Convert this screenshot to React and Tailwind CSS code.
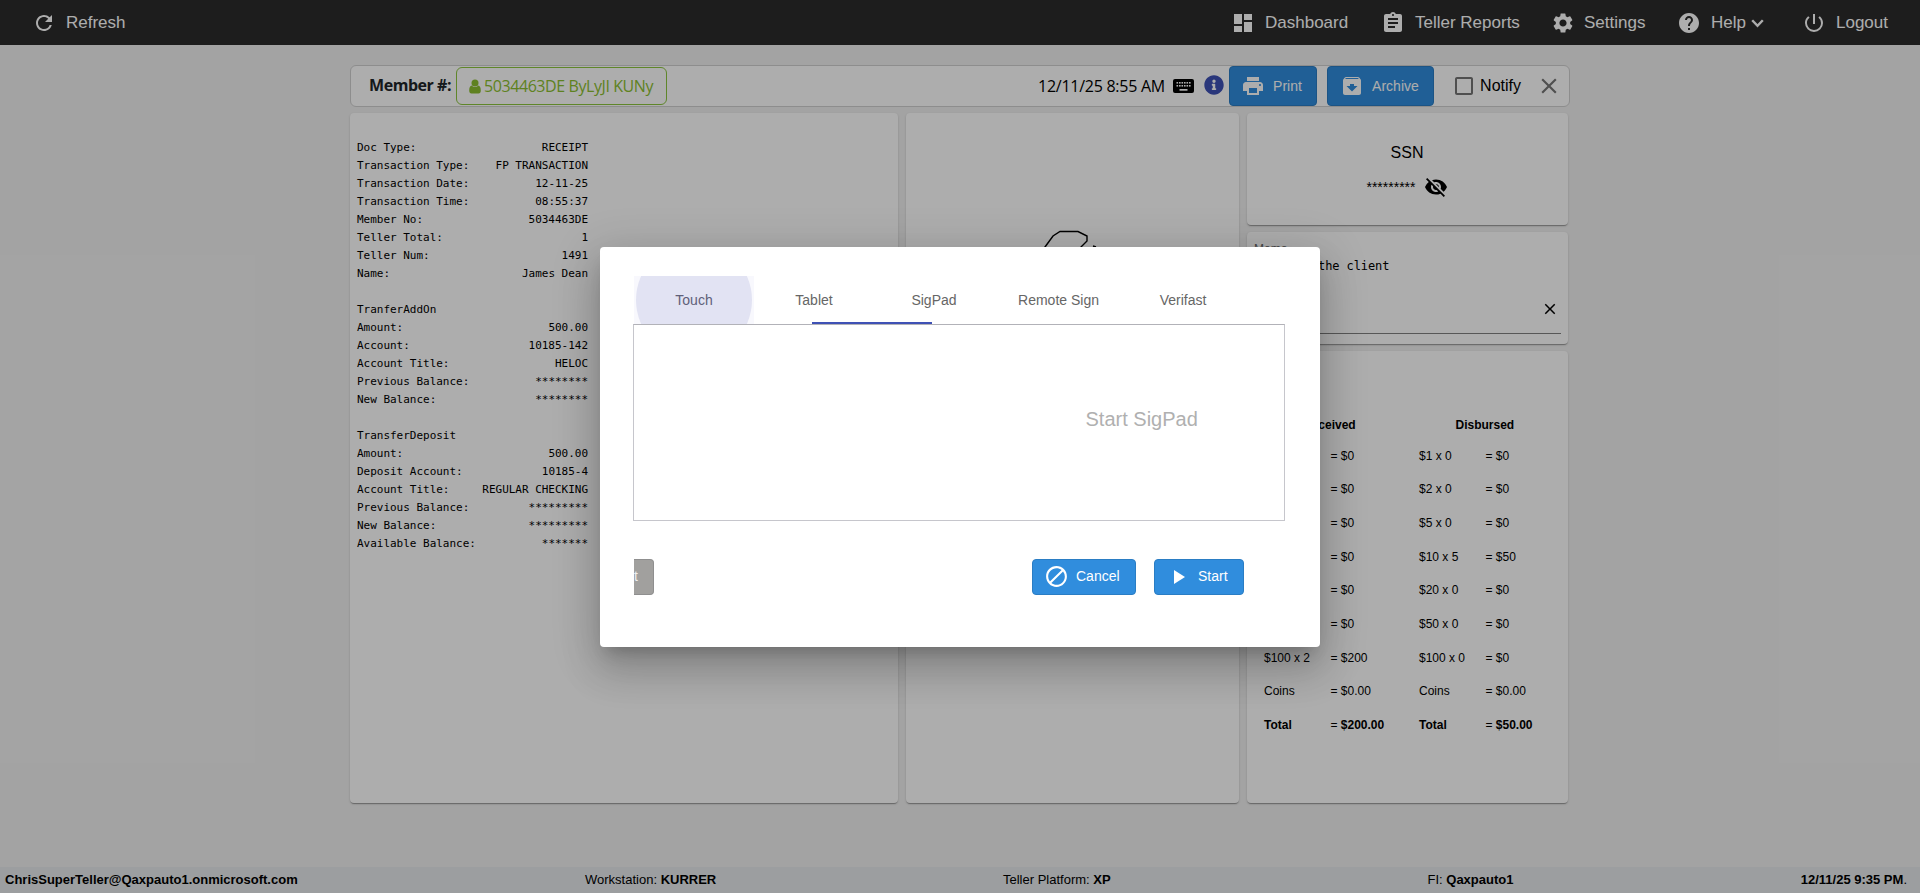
import React from "react";
import {
  MdRefresh, MdDashboard, MdAssignment, MdSettings, MdHelp, MdPowerSettingsNew,
  MdPrint, MdArchive, MdClose, MdVisibilityOff, MdBlock, MdPlayArrow, MdCheckBoxOutlineBlank,
} from "react-icons/md";
import { FaInfoCircle } from "react-icons/fa";

const receipt = [
  ["Doc Type:", "RECEIPT"],
  ["Transaction Type:", "FP TRANSACTION"],
  ["Transaction Date:", "12-11-25"],
  ["Transaction Time:", "08:55:37"],
  ["Member No:", "5034463DE"],
  ["Teller Total:", "1"],
  ["Teller Num:", "1491"],
  ["Name:", "James Dean"],
  ["", ""],
  ["TranferAddOn", ""],
  ["Amount:", "500.00"],
  ["Account:", "10185-142"],
  ["Account Title:", "HELOC"],
  ["Previous Balance:", "********"],
  ["New Balance:", "********"],
  ["", ""],
  ["TransferDeposit", ""],
  ["Amount:", "500.00"],
  ["Deposit Account:", "10185-4"],
  ["Account Title:", "REGULAR CHECKING"],
  ["Previous Balance:", "*********"],
  ["New Balance:", "*********"],
  ["Available Balance:", "*******"],
];

const cash = [
  ["$1 x 0", "$0", "$1 x 0", "$0"],
  ["$2 x 0", "$0", "$2 x 0", "$0"],
  ["$5 x 0", "$0", "$5 x 0", "$0"],
  ["$10 x 0", "$0", "$10 x 5", "$50"],
  ["$20 x 0", "$0", "$20 x 0", "$0"],
  ["$50 x 0", "$0", "$50 x 0", "$0"],
  ["$100 x 2", "$200", "$100 x 0", "$0"],
  ["Coins", "$0.00", "Coins", "$0.00"],
  ["Total", "$200.00", "Total", "$50.00"],
];

const card =
  "rounded bg-white shadow-[0_2px_1px_-1px_rgba(0,0,0,0.2),0_1px_1px_0_rgba(0,0,0,0.14),0_1px_3px_0_rgba(0,0,0,0.12)]";
const blueButton =
  "flex items-center rounded border border-[#2a7dc4] bg-[#308ddd] text-sm text-white";

function UserIcon() {
  return (
    <svg width="12" height="15" viewBox="0 0 12 15" fill="currentColor" className="mr-[3px]">
      <circle cx="6" cy="3.9" r="3.5" />
      <path d="M2.900 6.500C1 6.800 0.200 8.800 0.200 11.500C0.200 13.500 1 14.400 2.500 14.400H9.500C11 14.400 11.800 13.500 11.800 11.500C11.800 8.800 11 6.800 9.100 6.500C8.300 7.500 7.200 8 6 8S3.700 7.500 2.900 6.500Z" />
    </svg>
  );
}

function KeyboardIcon() {
  const keys = [3.5, 6, 8.5, 11, 13.5, 16];
  return (
    <svg width="21" height="14" viewBox="0 0 21 14">
      <rect width="21" height="14" rx="2" fill="black" />
      {keys.map((x) => <rect key={`a${x}`} x={x} y="3" width="1.6" height="1.6" fill="white" />)}
      {keys.map((x) => <rect key={`b${x}`} x={x} y="6" width="1.6" height="1.6" fill="white" />)}
      <rect x="6.5" y="10" width="8" height="1.7" fill="white" />
    </svg>
  );
}

function NavBar() {
  return (
    <nav className="flex h-[45px] items-center bg-[#2c2c2c] pl-8 text-[17px] text-white">
      <MdRefresh size={24} />
      <span className="ml-[10px]">Refresh</span>
      <div className="ml-auto flex items-center">
        <span className="flex w-[150px] items-center gap-[10px]"><MdDashboard size={24} />Dashboard</span>
        <span className="flex w-[170px] items-center gap-[10px]"><MdAssignment size={24} />Teller Reports</span>
        <span className="flex w-[126px] items-center gap-[9px]"><MdSettings size={24} />Settings</span>
        <span className="flex w-[125px] items-center">
          <MdHelp size={24} /><span className="ml-[10px]">Help</span>
          <svg className="mt-[2px] ml-[5px]" width="13" height="9" viewBox="0 0 13 9" fill="none" stroke="currentColor" strokeWidth="2.4"><path d="M1.2 1.2L6.5 6.8L11.8 1.2" /></svg>
        </span>
        <span className="flex w-[118px] items-center gap-[10px]"><MdPowerSettingsNew size={24} />Logout</span>
      </div>
    </nav>
  );
}

function MemberBar() {
  return (
    <div className="flex h-[42px] items-center rounded-[6px] border border-[#d0d0d0] bg-white">
      <span className="ml-[18px] w-[87px] whitespace-nowrap pb-[3px] font-['Open_Sans',sans-serif] text-[16px] font-bold tracking-[-0.45px] text-[#212529]">Member #:</span>
      <span className="flex h-[38px] w-[211px] items-center rounded-[6px] border border-[#8cc63f] pl-[12px] font-['Open_Sans',sans-serif] text-[16px] tracking-[-0.42px] whitespace-nowrap text-[#8cbf30]">
        <UserIcon />5034463DE ByLyJI KUNy
      </span>
      <span className="ml-auto flex items-center">
        <span className="w-[135px] whitespace-nowrap font-['Open_Sans',sans-serif] text-[16px] tracking-[-0.27px]">12/11/25 8:55 AM</span>
        <KeyboardIcon />
        <FaInfoCircle size={20} className="mr-[5px] mb-[2px] ml-[10px] text-[#3f51b5]" />
        <span className={`${blueButton} h-10 w-[88px] pl-[11px]`}><MdPrint size={24} /><span className="ml-2">Print</span></span>
        <span className={`${blueButton} ml-[10px] h-10 w-[107px] pl-3`}><MdArchive size={24} /><span className="ml-2">Archive</span></span>
        <MdCheckBoxOutlineBlank size={24} className="ml-[18px] text-[#757575]" />
        <span className="ml-1 text-base">Notify</span>
        <MdClose size={26} className="mr-[7px] ml-[15px] text-[#757575]" />
      </span>
    </div>
  );
}

function Receipt() {
  return (
    <section className={`${card} w-[548px] pt-[26px] pl-[7px] font-['DejaVu_Sans_Mono',monospace] text-[11px] leading-[18px]`}>
      {receipt.map(([label, value], i) => (
        <div key={i} className="flex h-[18px] w-[231px] justify-between whitespace-nowrap tracking-[-0.02px]">
          <span>{label}</span>
          <span>{value}</span>
        </div>
      ))}
    </section>
  );
}

function CashTable() {
  return (
    <section className={`${card} h-[452px] pt-[65px] pl-[17px] text-xs`}>
      <div className="flex h-[18px] items-center font-bold">
        <span className="w-[155px] pl-[39px]">Received</span>
        <span className="pl-[36.5px]">Disbursed</span>
      </div>
      <div className="mt-[5px]">
        {cash.map((row, i) => {
          const bold = i === cash.length - 1 ? "font-bold" : "";
          return (
            <div key={i} className="grid h-[33.65px] grid-cols-[66.5px_88.5px_66.5px_80px] items-center">
              <span className={bold}>{row[0]}</span>
              <span>= <span className={bold}>{row[1]}</span></span>
              <span className={bold}>{row[2]}</span>
              <span>= <span className={bold}>{row[3]}</span></span>
            </div>
          );
        })}
      </div>
    </section>
  );
}

function SignatureDialog() {
  return (
    <div className="h-[400px] w-[720px] rounded bg-white pt-[29px] pr-[35px] pl-[33px] shadow-[0_11px_15px_-7px_rgba(0,0,0,0.2),0_24px_38px_3px_rgba(0,0,0,0.14),0_9px_46px_8px_rgba(0,0,0,0.12)]">
      <div className="relative ml-px flex h-12 items-stretch text-sm text-[#666]">
        <div className="relative flex w-[120px] items-center justify-center overflow-hidden bg-[#f8f8fd]">
          <span className="absolute top-[-34px] left-[2px] size-[116px] rounded-full bg-[#e2e3f3]" />
          <span className="relative text-[#5f6079]">Touch</span>
        </div>
        <div className="flex w-[120px] items-center justify-center">Tablet</div>
        <div className="flex w-[120px] items-center justify-center">SigPad</div>
        <div className="flex w-[129px] items-center justify-center">Remote Sign</div>
        <div className="flex w-[120px] items-center justify-center">Verifast</div>
        <span className="absolute bottom-0 left-[178px] h-[2px] w-[120px] bg-[#3f51b5]" />
      </div>
      <div className="flex h-[197px] items-center border border-[#c6c6cc] border-t-[#b2b2b8] pb-[6px] pl-[451.5px] text-xl text-[#b0b0b0]">
        Start SigPad
      </div>
      <div className="mt-[38px] ml-px flex h-9 items-center">
        <span className="flex h-9 w-5 justify-start overflow-hidden rounded-r border border-l-0 border-[#8f8f8f] bg-[#a1a09e] text-sm leading-[33px] text-[#eee]">t</span>
        <span className={`${blueButton} ml-[378px] h-9 w-[104px] pl-[11px]`}><MdBlock size={25} /><span className="ml-[7px] pb-px">Cancel</span></span>
        <span className={`${blueButton} ml-[18px] h-9 w-[90px] pl-[11px]`}><MdPlayArrow size={24} /><span className="ml-2 pb-px">Start</span></span>
      </div>
    </div>
  );
}

export default function App() {
  return (
    <div className="relative flex h-[893px] flex-col overflow-hidden bg-[#f1f1f1] font-['Liberation_Sans',Arial,sans-serif] text-black">
      <NavBar />
      <main className="ml-[350px] w-[1220px] flex-1 pt-5">
        <MemberBar />
        <div className="mt-[6px] flex h-[690px] gap-2">
          <Receipt />
          <section className={`${card} w-[333px]`}>
            <svg className="mt-[114px] ml-[134px]" width="60" height="40" viewBox="1040 227 60 40" fill="none" stroke="black" strokeWidth="1.4">
              <path d="M1041 254L1045 247L1053 236L1060 231.5H1078L1087 236V241L1081 247L1070 256M1093 246l3 1" />
            </svg>
          </section>
          <div className="flex w-[321px] flex-col gap-[7px]">
            <section className={`${card} flex h-[112px] flex-col items-center pt-[28px]`}>
              <div className="mr-[1px] text-base leading-6">SSN</div>
              <div className="mt-[10px] mr-[1px] flex items-center gap-2 text-sm"><span>*********</span><MdVisibilityOff size={24} /></div>
            </section>
            <section className={`${card} h-[112px] px-[7px] pt-[9px]`}>
              <div className="h-4 text-xs leading-4 text-[#666]">Memo</div>
              <div className="flex h-[77px] items-end justify-between border-b border-[#808080]">
                <span className="self-start font-['DejaVu_Sans_Mono',monospace] text-[12px] leading-[18px] tracking-[-0.1px]">Memo for the client</span>
                <MdClose size={18} className="mr-[2px] mb-[15px]" />
              </div>
            </section>
            <CashTable />
          </div>
        </div>
      </main>
      <footer className="flex h-[26px] items-center bg-[#e6e9ec] pl-[5px] text-[13px]">
        <span className="w-[580px] font-bold">ChrisSuperTeller@Qaxpauto1.onmicrosoft.com</span>
        <span className="w-[418px]">Workstation: <b>KURRER</b></span>
        <span className="w-[424.5px]">Teller Platform: <b>XP</b></span>
        <span>FI: <b>Qaxpauto1</b></span>
        <span className="mr-[13px] ml-auto"><b>12/11/25 9:35 PM</b>.</span>
      </footer>
      <div className="absolute inset-0 flex items-center justify-center bg-black/32">
        <SignatureDialog />
      </div>
    </div>
  );
}
